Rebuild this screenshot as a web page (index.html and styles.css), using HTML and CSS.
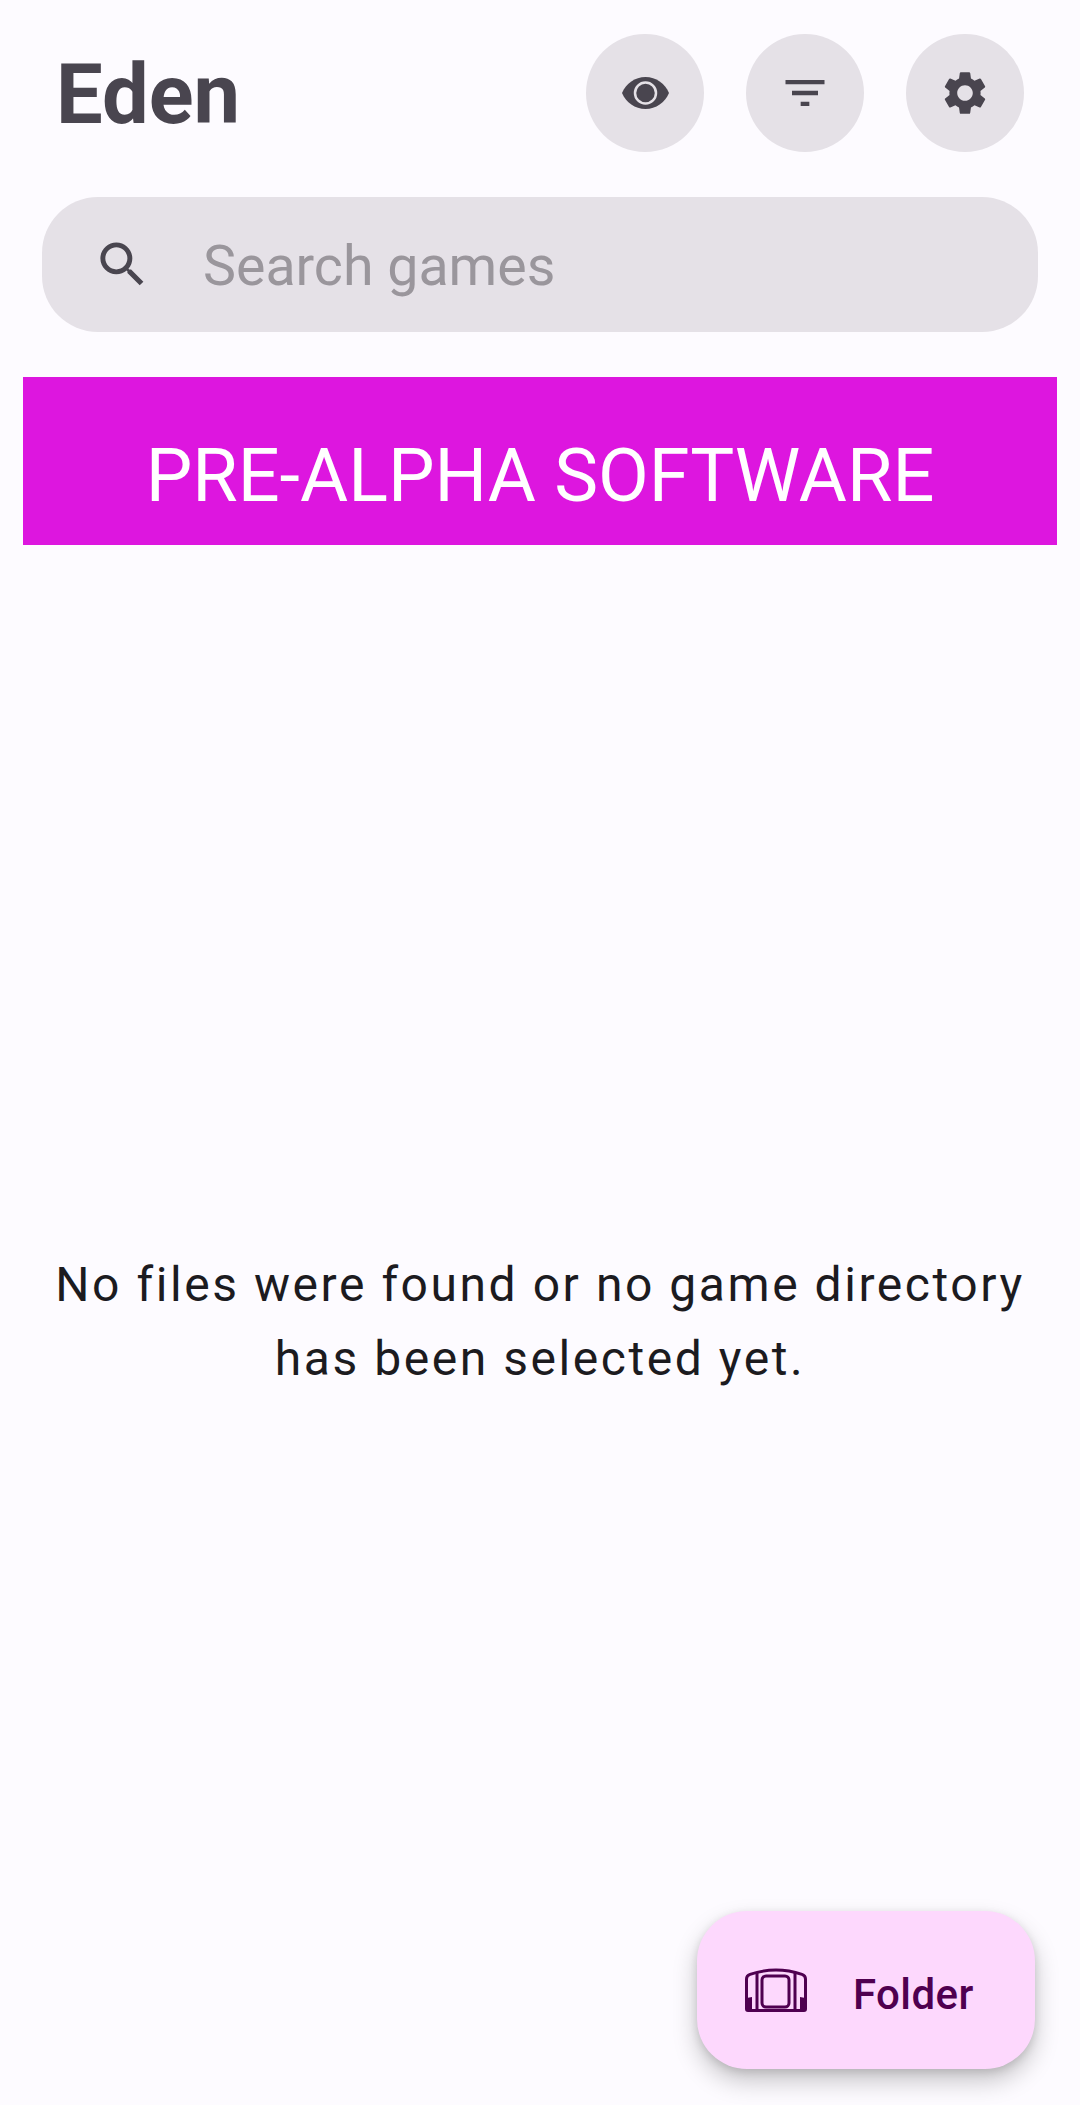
FILE: index.html
```html
<!DOCTYPE html>
<html lang="en">
<head>
    <meta charset="UTF-8">
    <meta name="viewport" content="width=device-width, initial-scale=1.0">
    <title>Eden</title>
    <link rel="stylesheet" href="styles.css">
</head>
<body>
    <div class="screen">
        <div class="top-bar">
            <h1 class="app-title">Eden</h1>
            <div class="top-actions">
                <button class="round-button">
                    <svg class="eye-icon" viewBox="0 0 47 32">
                        <path class="fill-dark" d="M23.5 0C13 0 4 6.5 0 16c4 9.500 13 16 23.500 16S43 25.500 47 16C43 6.500 34 0 23.500 0z"/>
                        <circle class="eye-ring" cx="23.500" cy="16" r="10.500"/>
                    </svg>
                </button>
                <button class="round-button">
                    <svg class="action-icon" viewBox="0 0 24 24">
                        <path class="fill-dark" d="M10 18h4v-2h-4v2zM3 6v2h18V6H3zm3 7h12v-2H6v2z"/>
                    </svg>
                </button>
                <button class="round-button">
                    <svg class="action-icon" viewBox="0 0 24 24">
                        <path class="fill-dark" d="M19.140 12.940c.04-.3.06-.61.06-.94 0-.32-.02-.64-.07-.94l2.030-1.580c.18-.14.23-.41.12-.61l-1.920-3.320c-.12-.22-.37-.29-.59-.22l-2.390.96c-.5-.38-1.030-.7-1.620-.94l-.36-2.540c-.04-.24-.24-.41-.48-.41h-3.840c-.24 0-.43.17-.47.41l-.36 2.540c-.59.24-1.130.57-1.620.94l-2.390-.96c-.22-.08-.47 0-.59.22L2.740 8.870c-.12.21-.08.47.12.61l2.030 1.580c-.05.3-.09.63-.09.94s.02.64.07.94l-2.030 1.580c-.18.14-.23.41-.12.61l1.920 3.320c.12.22.37.29.59.22l2.390-.96c.5.38 1.030.7 1.620.94l.36 2.540c.05.24.24.41.48.41h3.840c.24 0 .44-.17.47-.41l.36-2.540c.59-.24 1.130-.56 1.620-.94l2.390.96c.22.08.47 0 .59-.22l1.920-3.320c.12-.22.07-.47-.12-.61l-2.010-1.580zM12 15.600c-1.980 0-3.600-1.620-3.600-3.600s1.620-3.600 3.600-3.600 3.600 1.620 3.600 3.600-1.620 3.600-3.600 3.600z"/>
                    </svg>
                </button>
            </div>
        </div>

        <div class="search-bar">
            <svg class="search-icon" viewBox="0 0 24 24">
                <path class="fill-dark" d="M15.500 14h-.79l-.28-.27C15.410 12.590 16 11.110 16 9.500 16 5.910 13.090 3 9.500 3S3 5.910 3 9.500 5.910 16 9.500 16c1.610 0 3.090-.59 4.230-1.570l.27.28v.79l5 4.990L20.490 19l-4.990-5zm-6 0C7.010 14 5 11.990 5 9.500S7.010 5 9.500 5 14 7.010 14 9.500 11.990 14 9.500 14z"/>
            </svg>
            <span class="search-placeholder">Search games</span>
        </div>

        <div class="warning-banner">PRE-ALPHA SOFTWARE</div>

        <div class="empty-state">
            <p class="empty-text">No files were found or no game directory<br>has been selected yet.</p>
        </div>

        <button class="fab">
            <svg class="cart-icon" viewBox="0 0 62 44">
                <path class="cart-line" d="M1.500 41V11Q1.500 7.500 5 6.300Q18 2 31 2Q44 2 57 6.300Q60.500 7.500 60.500 11V41Q60.500 42.500 59 42.500H3Q1.500 42.500 1.500 41z"/>
                <path class="cart-line" d="M12 4.500V42M50 4.500V42"/>
                <rect class="cart-line" x="17" y="8" width="27" height="31" rx="4"/>
                <path class="cart-fill" d="M1.500 30L7 29L7 42.500H3Q1.500 42.500 1.500 41zM60.500 30L55 29L55 42.500H59Q60.500 42.500 60.500 41z"/>
            </svg>
            <span class="fab-label">Folder</span>
        </button>
    </div>
</body>
</html>
```

FILE: styles.css
```css
* {
    box-sizing: border-box;
}
body {
    margin: 0;
    background-color: #fdfbff;
    font-family: Roboto, "Liberation Sans", sans-serif;
}
.screen {
    position: relative;
    display: flex;
    flex-direction: column;
    height: 2105px;
    overflow: hidden;
}
.top-bar {
    display: flex;
    align-items: center;
    justify-content: space-between;
    padding: 34px 56px 0 56px;
}
.app-title {
    margin: 4px 0 0;
    font-size: 83px;
    font-weight: 700;
    line-height: 112px;
    color: #49454f;
}
.top-actions {
    display: flex;
    gap: 42px;
}
.round-button {
    display: flex;
    align-items: center;
    justify-content: center;
    width: 118px;
    height: 118px;
    padding: 0;
    border: none;
    border-radius: 50%;
    background-color: #e5e1e7;
}
.fill-dark {
    fill: #49454f;
}
.eye-icon {
    width: 47px;
    height: 32px;
}
.eye-ring {
    fill: #49454f;
    stroke: #e5e1e7;
    stroke-width: 2.500;
}
.action-icon {
    width: 52px;
    height: 52px;
}
.search-bar {
    display: flex;
    align-items: center;
    height: 135px;
    margin: 45px 42px 0 42px;
    padding-left: 51px;
    border-radius: 56px;
    background-color: #e5e1e7;
}
.search-icon {
    width: 59px;
    height: 59px;
}
.search-placeholder {
    margin: 3px 0 0 51px;
    font-size: 55.500px;
    color: #9a969c;
}
.warning-banner {
    height: 168px;
    margin: 45px 23px 0;
    padding-top: 57px;
    background-color: #dd16df;
    color: #fff;
    font-size: 73.800px;
    line-height: 84px;
    text-align: center;
}
.empty-state {
    flex: 1;
    padding-top: 703px;
}
.empty-text {
    margin: 0;
    color: #1c1b1f;
    font-size: 48px;
    line-height: 74px;
    letter-spacing: 2.550px;
    text-align: center;
}
.fab {
    position: absolute;
    left: 697px;
    top: 1911px;
    display: flex;
    align-items: center;
    width: 338px;
    height: 158px;
    padding: 0 0 0 48px;
    border: none;
    border-radius: 50px;
    background-color: #fdd8fd;
    box-shadow: 0 12px 24px rgba(0, 0, 0, 0.22), 0 3px 8px rgba(0, 0, 0, 0.12);
    font-family: inherit;
}
.cart-icon {
    width: 62px;
    height: 44px;
}
.cart-line {
    fill: none;
    stroke: #4f0050;
    stroke-width: 3;
}
.cart-fill {
    fill: #4f0050;
}
.fab-label {
    margin: 8px 0 0 46px;
    color: #4f0050;
    font-size: 42px;
    font-weight: 500;
    letter-spacing: 0.400px;
}
```
